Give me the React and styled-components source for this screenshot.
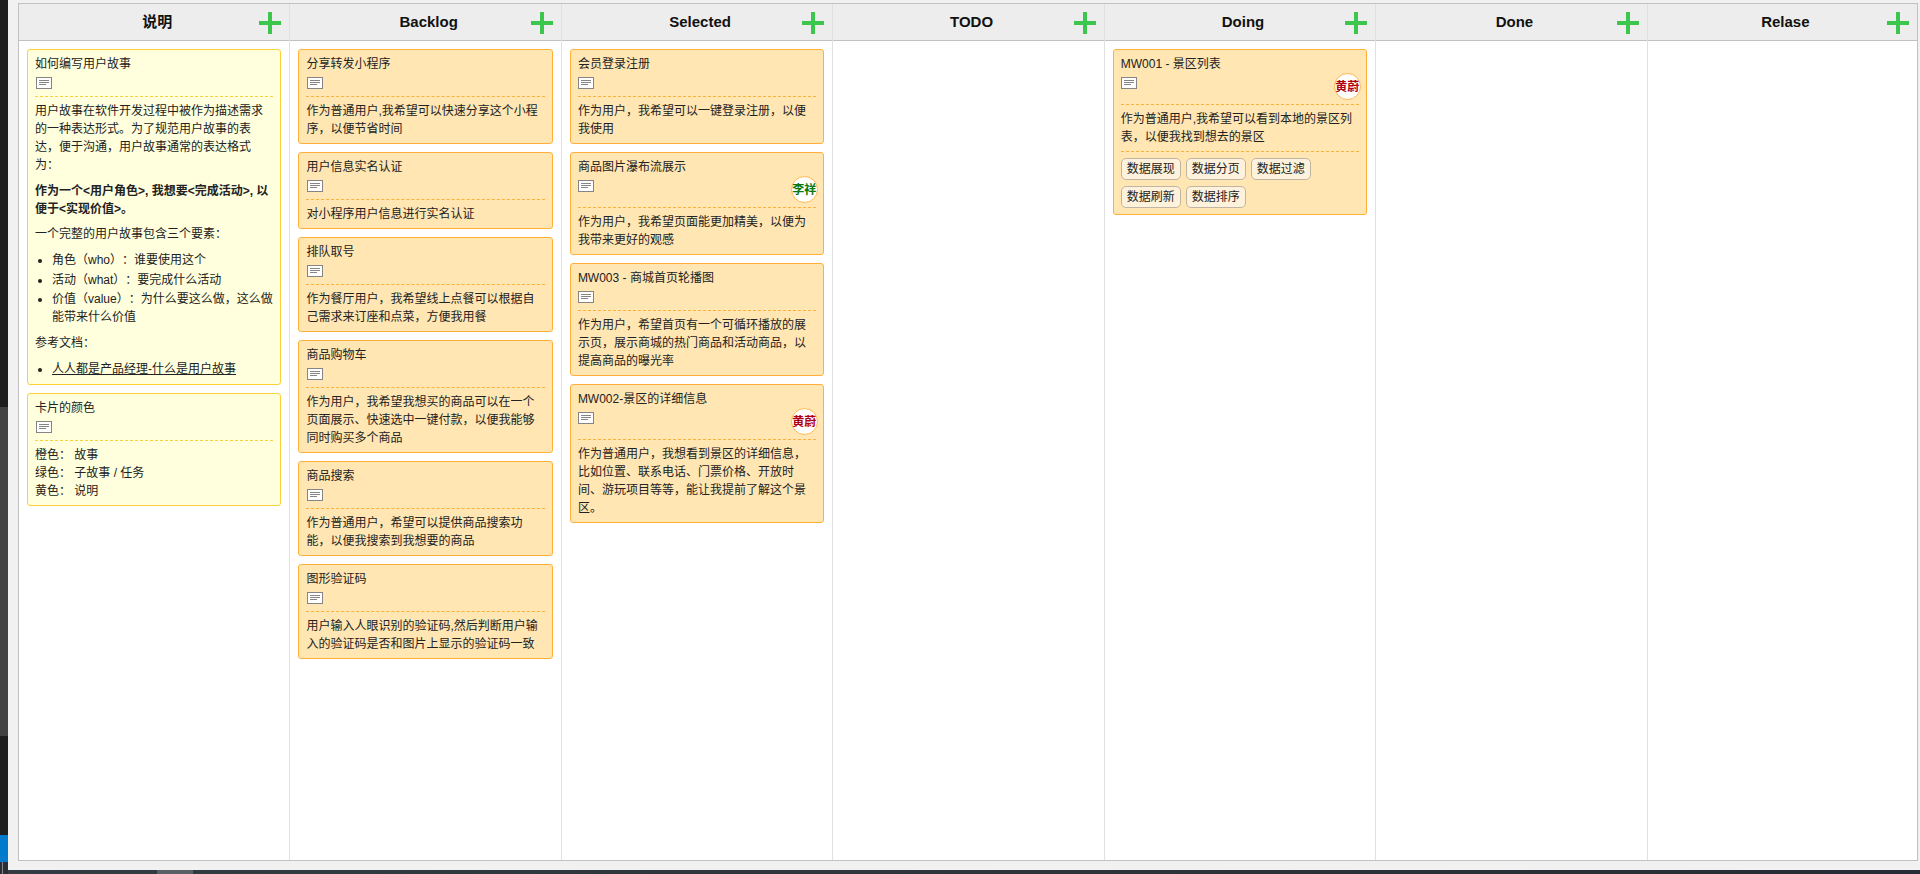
import React from 'react';
import styled, { createGlobalStyle } from 'styled-components';

const Global = createGlobalStyle`
  *, *::before, *::after { box-sizing: border-box; }
  body {
    margin: 0;
    overflow: hidden;
    background: #f1f1f1;
    color: #222;
    font: 12px/18px "Liberation Sans", "Noto Sans CJK SC", sans-serif;
    text-spacing-trim: space-all;
  }
`;

const Desktop = styled.div`
  display: grid;
  grid-template-columns: 8px 1fr;
  height: 874px;
`;

const Edge = styled.div`
  display: flex;
  flex-direction: column;
`;

const EdgePart = styled.div`
  height: ${(p) => p.$h}px;
  background: ${(p) => p.$color};
`;

const EdgeTray = styled.div`
  height: 12px;
  padding-left: 2px;
  background: #2a2d36;

  &::before {
    content: "";
    display: block;
    width: 1px;
    height: 12px;
    background: #85878c;
  }
`;

const Main = styled.div`
  display: flex;
  flex-direction: column;
  min-width: 0;
`;

const Taskbar = styled.div`
  height: 4px;
  padding-left: 149px;
  background: linear-gradient(90deg, #323b43, #2d343b 50%, #262c35);
`;

const TaskbarItem = styled.div`
  width: 36px;
  height: 4px;
  background: #586066;
`;

const Board = styled.div`
  display: grid;
  grid-template-columns: repeat(6, 271.45px) 1fr;
  height: 858px;
  margin: 3px 2px 9px 10px;
  border: 1px solid #c1c1c1;
  background: #fff;
`;

const Column = styled.section`
  display: flex;
  flex-direction: column;
  min-width: 0;
  border-right: 1px solid #e0e0e0;

  &:last-child { border-right: 0; }
`;

const ColumnHeader = styled.header`
  display: flex;
  align-items: center;
  height: 37px;
  padding: 0 8px 0 36px;
  border-bottom: 1px solid #c1c1c1;
  background: #ededed;
`;

const ColumnTitle = styled.h2`
  flex: 1;
  margin: 0;
  padding-bottom: 1px;
  color: #111;
  font-size: 15px;
  line-height: 20px;
  text-align: center;
`;

const AddButton = styled.button`
  display: flex;
  width: 22px;
  height: 22px;
  margin-top: 2px;
  padding: 0;
  border: 0;
  background: none;
`;

const CardList = styled.div`
  display: flex;
  flex-direction: column;
  gap: 8px;
  padding: 8px;
`;

const tones = {
  orange: { bg: '#ffe6b3', line: '#ffb03b' },
  yellow: { bg: '#ffffdd', line: '#fdd037' },
};

const CardBox = styled.article`
  --line: ${(p) => tones[p.$tone].line};
  padding: 5px 7px;
  border: 1px solid var(--line);
  border-radius: 3px;
  background: ${(p) => tones[p.$tone].bg};
`;

const CardTitle = styled.h3`
  margin: 0;
  font-size: 12px;
  font-weight: normal;
`;

const CardMeta = styled.div`
  display: flex;
  align-items: flex-start;
  justify-content: space-between;
  height: ${(p) => (p.$tall ? 31 : 23)}px;
  padding-left: 0.55px;
`;

const NoteIcon = styled.svg`
  display: block;
  width: 16px;
  height: 12px;
  margin-top: 4px;
`;

const Avatar = styled.span`
  display: flex;
  align-items: center;
  justify-content: center;
  width: 27px;
  height: 27px;
  margin-right: -2px;
  padding-right: 1px;
  border: 1px solid #ffb84f;
  border-radius: 50%;
  background: #fff;
  color: ${(p) => p.$color};
  font-weight: bold;
  white-space: nowrap;
`;

const CardBody = styled.div`
  padding-top: 5px;
  border-top: 1px dashed var(--line);
`;

const Paragraph = styled.p`
  margin: 0 0 ${(p) => p.$gap ?? 0}px;
  font-weight: ${(p) => (p.$strong ? 'bold' : 'normal')};
`;

const BulletList = styled.ul`
  margin: 0 0 ${(p) => p.$gap ?? 0}px;
  padding-left: 17px;
`;

const Bullet = styled.li`
  margin-bottom: ${(p) => p.$gap ?? 0}px;
`;

const DocLink = styled.a`
  color: inherit;
  text-decoration: underline;
`;

const Tags = styled.div`
  display: flex;
  flex-wrap: wrap;
  gap: 6px 5px;
  margin-top: 5px;
  padding: 6px 0 1px;
  border-top: 1px dashed var(--line);
`;

const Tag = styled.span`
  width: 60px;
  height: 22px;
  border: 1px solid #c0b5a1;
  border-radius: 5px;
  background: #fff2dc;
  line-height: 20px;
  text-align: center;
`;

function Card({ tone = 'orange', title, owner, ownerColor, tags, children }) {
  return (
    <CardBox $tone={tone}>
      <CardTitle>{title}</CardTitle>
      <CardMeta $tall={Boolean(owner)}>
        <NoteIcon viewBox="0 0 16 12" shapeRendering="crispEdges">
          <rect x="0.5" y="0.5" width="15" height="11" fill="#fff" stroke="#858585" />
          <path d="M3 3.5H13M3 5.5H13M3 7.5H10" stroke="#858585" />
        </NoteIcon>
        {owner && <Avatar $color={ownerColor}>{owner}</Avatar>}
      </CardMeta>
      <CardBody>{children}</CardBody>
      {tags && <Tags>{tags.map((t) => <Tag key={t}>{t}</Tag>)}</Tags>}
    </CardBox>
  );
}

const stories = {
  Backlog: [
    { title: '分享转发小程序', text: '作为普通用户,我希望可以快速分享这个小程序，以便节省时间' },
    { title: '用户信息实名认证', text: '对小程序用户信息进行实名认证' },
    { title: '排队取号', text: '作为餐厅用户，我希望线上点餐可以根据自己需求来订座和点菜，方便我用餐' },
    { title: '商品购物车', text: '作为用户，我希望我想买的商品可以在一个页面展示、快速选中一键付款，以便我能够同时购买多个商品' },
    { title: '商品搜索', text: '作为普通用户，希望可以提供商品搜索功能，以便我搜索到我想要的商品' },
    { title: '图形验证码', text: '用户输入人眼识别的验证码,然后判断用户输入的验证码是否和图片上显示的验证码一致' },
  ],
  Selected: [
    { title: '会员登录注册', text: '作为用户，我希望可以一键登录注册，以便我使用' },
    { title: '商品图片瀑布流展示', owner: '李祥', ownerColor: '#0b7a0b', text: '作为用户，我希望页面能更加精美，以便为我带来更好的观感' },
    { title: 'MW003 - 商城首页轮播图', text: '作为用户，希望首页有一个可循环播放的展示页，展示商城的热门商品和活动商品，以提高商品的曝光率' },
    { title: 'MW002-景区的详细信息', owner: '黄蔚', ownerColor: '#b00010', text: '作为普通用户，我想看到景区的详细信息，比如位置、联系电话、门票价格、开放时间、游玩项目等等，能让我提前了解这个景区。' },
  ],
  Doing: [
    {
      title: 'MW001 - 景区列表',
      owner: '黄蔚',
      ownerColor: '#b00010',
      text: '作为普通用户,我希望可以看到本地的景区列表，以便我找到想去的景区',
      tags: ['数据展现', '数据分页', '数据过滤', '数据刷新', '数据排序'],
    },
  ],
};

function Guide() {
  return (
    <>
      <Card tone="yellow" title="如何编写用户故事">
        <Paragraph $gap={8}>用户故事在软件开发过程中被作为描述需求的一种表达形式。为了规范用户故事的表达，便于沟通，用户故事通常的表达格式为：</Paragraph>
        <Paragraph $strong $gap={7}>作为一个&lt;用户角色&gt;, 我想要&lt;完成活动&gt;, 以便于&lt;实现价值&gt;。</Paragraph>
        <Paragraph $gap={8}>一个完整的用户故事包含三个要素：</Paragraph>
        <BulletList $gap={8}>
          <Bullet $gap={2}>角色（who）：谁要使用这个</Bullet>
          <Bullet $gap={1}>活动（what）：要完成什么活动</Bullet>
          <Bullet>价值（value）：为什么要这么做，这么做能带来什么价值</Bullet>
        </BulletList>
        <Paragraph $gap={8}>参考文档：</Paragraph>
        <BulletList $gap={1}>
          <Bullet><DocLink>人人都是产品经理-什么是用户故事</DocLink></Bullet>
        </BulletList>
      </Card>
      <Card tone="yellow" title="卡片的颜色">
        <Paragraph>橙色： 故事</Paragraph>
        <Paragraph>绿色： 子故事 / 任务</Paragraph>
        <Paragraph>黄色： 说明</Paragraph>
      </Card>
    </>
  );
}

const columns = ['说明', 'Backlog', 'Selected', 'TODO', 'Doing', 'Done', 'Relase'];

export default function App() {
  return (
    <>
      <Global />
      <Desktop>
        <Edge>
          <EdgePart $h={407} $color="#1e1e1e" />
          <EdgePart $h={329} $color="#424242" />
          <EdgePart $h={99} $color="#1e1e1e" />
          <EdgePart $h={27} $color="#007acc" />
          <EdgeTray />
        </Edge>
        <Main>
          <Board>
            {columns.map((name) => (
              <Column key={name}>
                <ColumnHeader>
                  <ColumnTitle>{name}</ColumnTitle>
                  <AddButton aria-label="+">
                    <svg width="22" height="22" viewBox="0 0 22 22">
                      <path d="M11 0V22M0 11H22" stroke="#3cc64d" strokeWidth="4" />
                    </svg>
                  </AddButton>
                </ColumnHeader>
                <CardList>
                  {name === '说明' && <Guide />}
                  {(stories[name] || []).map(({ text, ...card }) => (
                    <Card key={card.title} {...card}>
                      <Paragraph>{text}</Paragraph>
                    </Card>
                  ))}
                </CardList>
              </Column>
            ))}
          </Board>
          <Taskbar><TaskbarItem /></Taskbar>
        </Main>
      </Desktop>
    </>
  );
}
